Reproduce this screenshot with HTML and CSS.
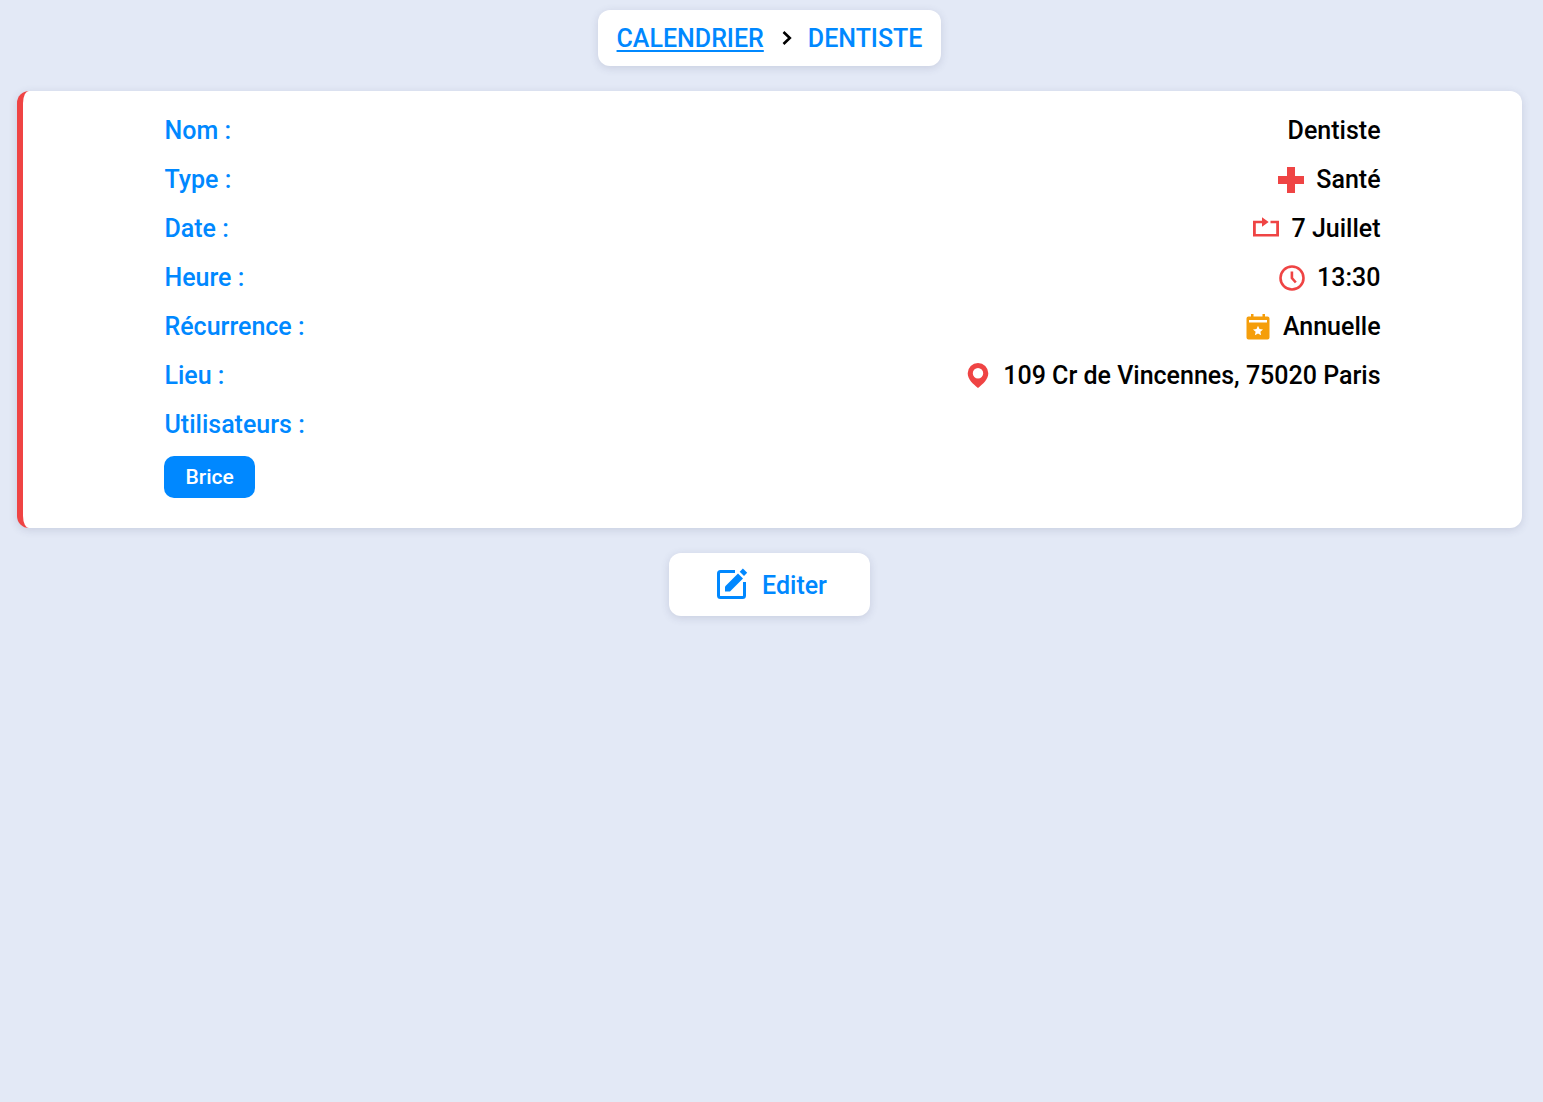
FILE: index.html
```html
<!DOCTYPE html>
<html lang="fr">
<head>
  <meta charset="utf-8">
  <meta name="viewport" content="width=device-width, initial-scale=1">
  <title>Dentiste</title>
  <link rel="stylesheet" href="styles.css">
</head>
<body>
  <nav class="breadcrumb" aria-label="Fil d'Ariane">
    <a class="breadcrumb-link" href="#calendrier">CALENDRIER</a>
    <svg class="chevron" viewBox="0 0 10 16" aria-hidden="true"><path d="M1.5 1 7.8 7 1.5 13" fill="none" stroke="currentColor" stroke-width="2.6"/></svg>
    <span class="breadcrumb-current">DENTISTE</span>
  </nav>

  <main class="card">
    <dl class="details">
      <div class="row"><dt>Nom :</dt><dd>Dentiste</dd></div>
      <div class="row"><dt>Type :</dt><dd>
        <svg class="icon red" viewBox="0 0 26 26" aria-hidden="true"><path d="M9 0h8v9h9v8h-9v9H9v-9H0V9h9z"/></svg>
        Santé</dd></div>
      <div class="row"><dt>Date :</dt><dd>
        <svg class="icon red" viewBox="0 0 26 26" aria-hidden="true"><path d="M9 1.300 15.700 6 9 10.700V7.300H2.800v10.600h20.400V7.300H17.500V4.700H26v15.800H0V4.700h9z"/></svg>
        7 Juillet</dd></div>
      <div class="row"><dt>Heure :</dt><dd>
        <svg class="icon red" viewBox="0 0 26 26" aria-hidden="true"><path d="M13 1.500a11.500 11.500 0 1 0 0 23 11.500 11.500 0 0 0 0-23zM12.900 6.500v6.500l3.900 4.500" fill="none" stroke="currentColor" stroke-width="2.600"/></svg>
        13:30</dd></div>
      <div class="row"><dt>Récurrence :</dt><dd>
        <svg class="icon orange" viewBox="0 0 26 26" aria-hidden="true"><path fill-rule="evenodd" d="M6 0h2.500v2.500h9V0H20v2.500h2.500q2 0 2 2v19q0 2-2 2h-19q-2 0-2-2v-19q0-2 2-2H6zM4 6v2.500h18V6zM13 11.800l-1.500 3.200-3.500.4 2.600 2.400-.7 3.500 3.100-1.700 3.100 1.700-.7-3.500 2.600-2.400-3.500-.4z"/></svg>
        Annuelle</dd></div>
      <div class="row"><dt>Lieu :</dt><dd>
        <svg class="icon red" viewBox="0 0 26 26" aria-hidden="true"><path fill-rule="evenodd" d="M13 0A10.300 10.300 0 0 0 2.700 10.300C2.700 16.500 8 21 13 25c5-4 10.300-8.500 10.300-14.700A10.300 10.300 0 0 0 13 0zm0 5.100a5.200 5.200 0 1 1 0 10.400 5.200 5.200 0 0 1 0-10.400z"/></svg>
        109 Cr de Vincennes, 75020 Paris</dd></div>
      <div class="row"><dt>Utilisateurs :</dt></div>
    </dl>
    <button class="user" type="button">Brice</button>
  </main>

  <button class="edit" type="button">
    <svg class="edit-icon" viewBox="0 0 32 32" aria-hidden="true"><path d="M19 2.500H4.500q-2 0-2 2v22q0 2 2 2h22q2 0 2-2V13" fill="none" stroke="currentColor" stroke-width="3"/><path d="m9 17.500 13-13 5 5-13 13H9z" fill="currentColor"/><path d="m23.700 2.700 3.200-3.200 4.300 4.300L28 7z" fill="currentColor"/></svg>
    Editer
  </button>
</body>
</html>
```

FILE: styles.css
```css
* {
  box-sizing: border-box;
}

body {
  margin: 0;
  padding: 10px 21px 24px 17px;
  display: flex;
  flex-direction: column;
  align-items: center;
  gap: 25px;
  background: #e3e9f6;
  color: #000;
  font: 500 25px/29px Roboto, sans-serif;
}

.breadcrumb,
.card,
.edit {
  background: #fff;
  border-radius: 12px;
  box-shadow: 0 2px 8px rgb(60 70 110 / 16%);
}

.breadcrumb {
  display: flex;
  align-items: center;
  padding: 14px 19px 13px;
  color: #08f;
}

.breadcrumb-link {
  color: inherit;
  text-underline-offset: 3px;
  text-decoration-thickness: 2px;
}

.chevron {
  width: 10px;
  height: 16px;
  margin: 0 16px 0 18px;
  color: #000;
}

.card {
  width: 100%;
  padding: 15px 9.4% 30px;
  border-left: 6px solid #ef4444;
}

.details {
  margin: 0 0 7px;
}

.row {
  display: flex;
  justify-content: space-between;
  padding: 10px 0;
}

dt {
  color: #08f;
}

dd {
  display: flex;
  align-items: center;
  gap: 12px;
  margin: 0;
}

.icon {
  width: 26px;
  height: 26px;
  fill: currentColor;
}

.red {
  color: #ef4444;
}

.orange {
  color: #f59e0b;
}

button {
  border: 0;
  font: inherit;
  cursor: pointer;
}

.user {
  display: block;
  padding: 7px 21px 6px;
  border-radius: 10px;
  background: #08f;
  color: #fff;
  font-size: 21px;
}

.edit {
  display: flex;
  align-items: center;
  gap: 14px;
  padding: 16px 43px 15px 47px;
  color: #08f;
}

.edit-icon {
  width: 32px;
  height: 32px;
  overflow: visible;
}
```
